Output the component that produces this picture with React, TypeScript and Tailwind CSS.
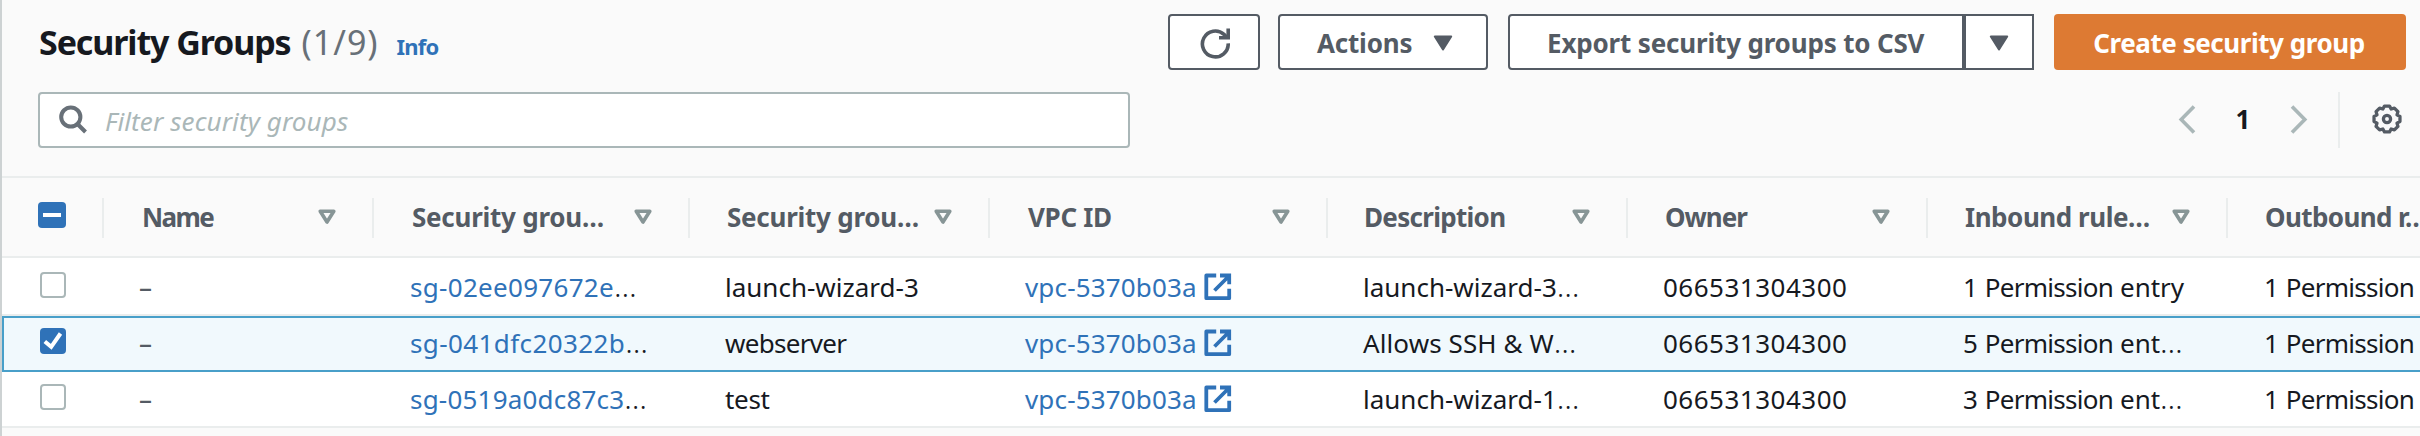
import React from "react";

function Caret() {
  return (
    <svg width="20" height="16" viewBox="0 0 20 16" className="shrink-0">
      <path d="M1.800 1.500h16.400L10 14.500z" fill="#545b64" stroke="#545b64" strokeWidth="2" strokeLinejoin="round" />
    </svg>
  );
}

function SortIcon() {
  return (
    <svg width="20" height="16" viewBox="0 0 20 16" className="shrink-0">
      <path d="M3.200 2.200h13.600L10 13z" fill="none" stroke="#879596" strokeWidth="3.600" strokeLinejoin="round" />
    </svg>
  );
}

function ExternalIcon() {
  return (
    <svg width="28" height="28" viewBox="0 0 28 28" className="ml-[7px] shrink-0">
      <g fill="none" stroke="#2f72b8" strokeWidth="3.800">
        <path d="M12.200 2.500H2.300v22.700H25.200V15.800" strokeLinejoin="round" />
        <path d="M16 2.500h9.200v8.700M10.500 17.500L24.500 3.500" />
      </g>
    </svg>
  );
}

function GearIcon() {
  return (
    <svg width="30" height="30" viewBox="0 0 30 30" fill="none" stroke="#545b64" strokeWidth="3.300" strokeLinejoin="round">
      <circle cx="15" cy="15" r="3.600" />
      <path d="M27.960 12.480V17.520L24.980 19.130L25.940 22.380L22.380 25.940L19.130 24.980L17.520 27.960H12.480L10.870 24.980L7.620 25.940L4.060 22.380L5.020 19.130L2.040 17.520V12.480L5.020 10.870L4.060 7.620L7.620 4.060L10.870 5.020L12.480 2.040H17.520L19.130 5.020L22.380 4.060L25.940 7.620L24.980 10.870Z" />
    </svg>
  );
}

function Checkbox({ checked }: { checked: boolean }) {
  if (!checked) return <span className="h-[26px] w-[26px] rounded-[4px] border-2 border-[#aab7b8] bg-white" />;
  return (
    <span className="flex h-[26px] w-[26px] items-center justify-center rounded-[4px] bg-[#2f72b8]">
      <svg width="26" height="26" viewBox="0 0 26 26" fill="none" stroke="#fff" strokeWidth="4">
        <path d="M4.800 13.500l6.400 5.300L20.500 5.500" />
      </svg>
    </span>
  );
}

function Dots() {
  return <span className="text-[31px] font-light leading-none">…</span>;
}

const columns = [
  { label: "Name", style: "w-[270px] pl-[38px] tracking-[-1.6px]" },
  { label: "Security grou…", style: "w-[316px] pl-[38px] tracking-[-0.25px]" },
  { label: "Security grou…", style: "w-[300px] pl-[37px] tracking-[-0.25px]" },
  { label: "VPC ID", style: "w-[338px] pl-[38px] tracking-[-0.3px]" },
  { label: "Description", style: "w-[300px] pl-[36px] tracking-[-0.7px]" },
  { label: "Owner", style: "w-[300px] pl-[37px] tracking-[-1px]" },
  { label: "Inbound rule…", style: "w-[300px] pl-[37px] tracking-[-0.45px]" },
  { label: "Outbound r…", style: "w-[300px] pl-[37px] tracking-[-0.6px]" },
];

const rows = [
  {
    id: "sg-02ee097672e", idStyle: "tracking-[0.3px]",
    name: "launch-wizard-3", nameStyle: "tracking-[0px]",
    desc: "launch-wizard-3", descStyle: "pl-[0px]",
    count: "1", rest: "entry", cut: false, selected: false,
    rowStyle: "h-[58px] border-b-2 border-[#eaeded] bg-white pt-[1px]", boxStyle: "w-[137px] pl-[38px] pb-[3px]",
  },
  {
    id: "sg-041dfc20322b", idStyle: "tracking-[0.4px]",
    name: "webserver", nameStyle: "tracking-[-0.7px]",
    desc: "Allows SSH & W", descStyle: "tracking-[0.1px]",
    count: "5", rest: "ent", cut: true, selected: true,
    rowStyle: "h-[56px] border-y-2 border-l-2 border-[#489fc9] bg-[#f1f9fd] pb-[3px]", boxStyle: "w-[135px] pl-[36px] pb-[3px]",
  },
  {
    id: "sg-0519a0dc87c3", idStyle: "tracking-[0.2px]",
    name: "test", nameStyle: "tracking-[-0.3px]",
    desc: "launch-wizard-1", descStyle: "pl-[0px]",
    count: "3", rest: "ent", cut: true, selected: false,
    rowStyle: "h-[56px] border-b-2 border-[#eaeded] bg-white pb-[1px]", boxStyle: "w-[137px] pl-[38px] pb-[3px]",
  },
];

function Permission() {
  return <span className="tracking-[-0.7px]">Permission</span>;
}

export default function App() {
  return (
    <div className="h-[436px] w-[2420px] overflow-hidden whitespace-nowrap border-l-2 border-[#cdd2d3] bg-[#fafafa] font-['Noto_Sans',sans-serif] text-[26px] leading-[36px] text-[#16191f]">
      <div className="flex h-[70px] items-start justify-between pl-[37px] pr-[14px] pt-[14px]">
        <div className="flex items-baseline pt-[5px]">
          <h1 className="text-[34px] font-bold leading-[46px] tracking-[-1.1px]">Security Groups</h1>
          <span className="ml-[11px] text-[34px] tracking-[1px] text-[#687078]">(1/9)</span>
          <a className="ml-[18px] text-[22px] font-bold tracking-[-0.8px] text-[#2f72b8]">Info</a>
        </div>
        <div className="flex font-bold text-[#545b64]">
          <button className="flex h-[56px] w-[92px] items-center justify-center rounded-[4px] border-2 border-[#545b64] bg-white pl-[2px] pt-[2px]">
            <svg width="30" height="31" viewBox="0 0 30 31" fill="none" stroke="#545b64" strokeWidth="3.600">
              <path d="M28.200 15.300A12.900 12.900 0 1 1 24 6.400L26.500 9" />
              <path d="M28.200 .5v9.200H19" />
            </svg>
          </button>
          <button className="ml-[18px] flex h-[56px] w-[210px] items-center rounded-[4px] border-2 border-[#545b64] bg-white pl-[37px] pt-[1px]">
            <span className="w-[116px] text-left tracking-[-0.2px]">Actions</span>
            <Caret />
          </button>
          <div className="ml-[20px] flex">
            <button className="h-[56px] w-[456px] rounded-l-[4px] border-2 border-[#545b64] bg-white pl-[37px] pt-[1px] text-left tracking-[-0.17px]">
              Export security groups to CSV
            </button>
            <button className="flex h-[56px] w-[70px] items-center justify-center border-2 border-[#545b64] bg-white pt-[1px]">
              <Caret />
            </button>
          </div>
          <button className="ml-[20px] h-[56px] w-[352px] rounded-[4px] bg-[#dd7a33] pr-[2px] pt-[1px] tracking-[-0.45px] text-white">
            Create security group
          </button>
        </div>
      </div>
      <div className="flex h-[106px] items-start justify-between pl-[36px] pr-[18px] pt-[22px]">
        <div className="flex h-[56px] w-[1092px] items-center rounded-[4px] border-2 border-[#aab7b8] bg-white pl-[19px]">
          <svg width="30" height="30" viewBox="0 0 30 30" fill="none" stroke="#687078" strokeWidth="4">
            <circle cx="11.800" cy="12" r="9.600" />
            <path d="M18 18.500l8.500 8.500" />
          </svg>
          <span className="ml-[16px] pt-[1px] italic tracking-[0.1px] text-[#aab7b8]">Filter security groups</span>
        </div>
        <div className="flex h-[56px] items-center">
          <svg width="18" height="30" viewBox="0 0 18 30" fill="none" stroke="#aab7b8" strokeWidth="3.600">
            <path d="M16 1.500L3.200 14.500 16 27.500" />
          </svg>
          <span className="w-[94px] pb-[2px] text-center font-bold">1</span>
          <svg width="18" height="30" viewBox="0 0 18 30" fill="none" stroke="#aab7b8" strokeWidth="3.600">
            <path d="M2 1.500l12.800 13L2 27.500" />
          </svg>
          <span className="ml-[30px] mr-[32px] h-[56px] w-[2px] bg-[#eaeded]" />
          <div className="pb-[2px]">
            <GearIcon />
          </div>
        </div>
      </div>
      <div className="flex h-[82px] items-center border-y-2 border-[#eaeded]">
        <div className="w-[100px] shrink-0 pb-[4px] pl-[36px]">
          <div className="flex h-[26px] w-[28px] items-center justify-center rounded-[4px] bg-[#2f72b8]">
            <span className="h-[4px] w-[18px] bg-white" />
          </div>
        </div>
        {columns.map((c, i) => (
          <div key={i} className={`mt-[2px] flex h-[40px] shrink-0 items-center justify-between border-l-2 border-[#eaeded] pb-[3px] pr-[35px] font-bold text-[#545b64] ${c.style}`}>
            <span>{c.label}</span>
            <SortIcon />
          </div>
        ))}
      </div>
      {rows.map((r) => (
        <div key={r.id} className={`flex items-center *:shrink-0 ${r.rowStyle}`}>
          <span className={`flex ${r.boxStyle}`}>
            <Checkbox checked={r.selected} />
          </span>
          <span className="w-[271px] font-medium text-[#545b64]">–</span>
          <span className="h-[36px] w-[315px]">
            <span className={`text-[#2f72b8] ${r.idStyle}`}>{r.id}</span>
            <Dots />
          </span>
          <span className={`w-[300px] ${r.nameStyle}`}>{r.name}</span>
          <span className="flex w-[338px] items-center tracking-[0.15px] text-[#2f72b8]">
            vpc-5370b03a
            <ExternalIcon />
          </span>
          <span className={`h-[36px] w-[300px] ${r.descStyle}`}>
            {r.desc}
            <Dots />
          </span>
          <span className="w-[300px] tracking-[0.5px]">066531304300</span>
          <span className="h-[36px] w-[301px]">
            {r.count} <Permission /> {r.rest}
            {r.cut && <Dots />}
          </span>
          <span>1 <Permission /></span>
        </div>
      ))}
    </div>
  );
}
